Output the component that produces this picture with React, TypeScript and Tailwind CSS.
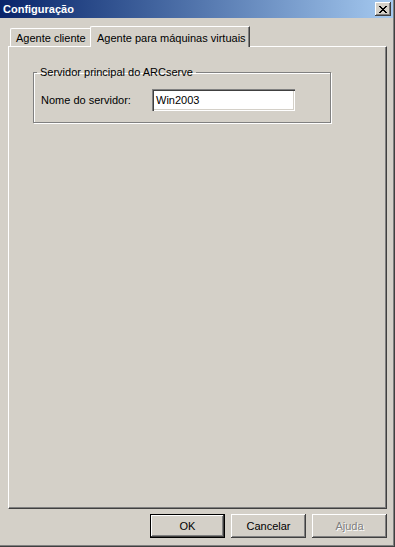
import React from "react";

// Classic Windows dialog: "Configuração" with two tabs

const font = "font-['Tahoma','Liberation_Sans','DejaVu_Sans',sans-serif]";

function CloseButton() {
  return (
    <div className="w-[16px] h-[14px] bg-[#d4d0c8] shadow-[inset_-1px_-1px_#404040,inset_1px_1px_#ffffff,inset_-2px_-2px_#808080] flex items-center justify-center">
      <svg width="8" height="7" viewBox="0 0 8 7" shapeRendering="crispEdges">
        <path
          d="M0 0h2v1h-2zM6 0h2v1h-2zM1 1h2v1h-2zM5 1h2v1h-2zM2 2h4v1h-4zM3 3h2v1h-2zM2 4h4v1h-4zM1 5h2v1h-2zM5 5h2v1h-2zM0 6h2v1h-2zM6 6h2v1h-2z"
          fill="#000"
        />
      </svg>
    </div>
  );
}

type BtnProps = { label: string; isDefault?: boolean; disabled?: boolean };

function DialogButton({ label, isDefault, disabled }: BtnProps) {
  const bevel = isDefault
    ? "border border-black shadow-[inset_-1px_-1px_#404040,inset_1px_1px_#ffffff,inset_-2px_-2px_#808080]"
    : "shadow-[inset_-1px_-1px_#404040,inset_1px_1px_#ffffff,inset_-2px_-2px_#808080]";
  return (
    <div
      className={`w-[75px] h-[24px] bg-[#d4d0c8] flex items-center justify-center text-[11px] ${bevel} ${
        disabled ? "text-[#808080] [text-shadow:1px_1px_#ffffff]" : "text-black"
      }`}
    >
      {label}
    </div>
  );
}

export default function App() {
  return (
    <div
      className={`w-[395px] h-[547px] bg-[#d4d0c8] flex flex-col text-[11px] text-black ${font} shadow-[inset_-1px_-1px_#404040,inset_-2px_-2px_#808080]`}
    >
      {/* Title bar */}
      <div className="h-[18px] mr-[2px] bg-gradient-to-r from-[#0a246a] to-[#a6caf0] flex items-center justify-between pl-[3px] pr-[2px]">
        <span className="text-white font-bold text-[11px] leading-none">Configuração</span>
        <CloseButton />
      </div>

      {/* Tabs */}
      <div className="mt-[8px] mx-[8px] flex items-end h-[20px] relative z-10">
        <div className="ml-[2px] w-[80px] h-[18px] border-l border-t border-white rounded-tl-[2px] flex items-center pl-[5px] pt-[1px]">
          Agente cliente
        </div>
        <div className="w-[160px] h-[21px] -mb-[1px] bg-[#d4d0c8] border-l border-t border-white rounded-tl-[2px] shadow-[inset_-1px_0_#808080] border-r border-r-[#404040] flex items-start pl-[6px] pt-[3px]">
          Agente para máquinas virtuais
        </div>
      </div>

      {/* Tab panel */}
      <div className="mx-[8px] w-[379px] h-[463px] border-l border-t border-white border-r border-b border-r-[#404040] border-b-[#404040] shadow-[inset_-1px_-1px_#808080] pt-[19px] pl-[24px]">
        <fieldset className="w-[298px] h-[57px] border border-[#808080] shadow-[inset_1px_1px_#ffffff,1px_1px_#ffffff] m-0 p-0 pl-[3px]">
          <legend className="px-[3px] leading-[13px]">Servidor principal do ARCserve</legend>
          <div className="flex items-center ml-[4px] mt-[10px]">
            <span className="w-[111px]">Nome do servidor:</span>
            <div className="w-[143px] h-[22px] bg-white shadow-[inset_1px_1px_#808080,inset_2px_2px_#404040,inset_-1px_-1px_#ffffff,inset_-2px_-2px_#d4d0c8] flex items-center pl-[4px]">
              Win2003
            </div>
          </div>
        </fieldset>
      </div>

      {/* Buttons */}
      <div className="mt-[5px] flex justify-end gap-[6px] pr-[8px]">
        <DialogButton label="OK" isDefault />
        <DialogButton label="Cancelar" />
        <DialogButton label="Ajuda" disabled />
      </div>
    </div>
  );
}
